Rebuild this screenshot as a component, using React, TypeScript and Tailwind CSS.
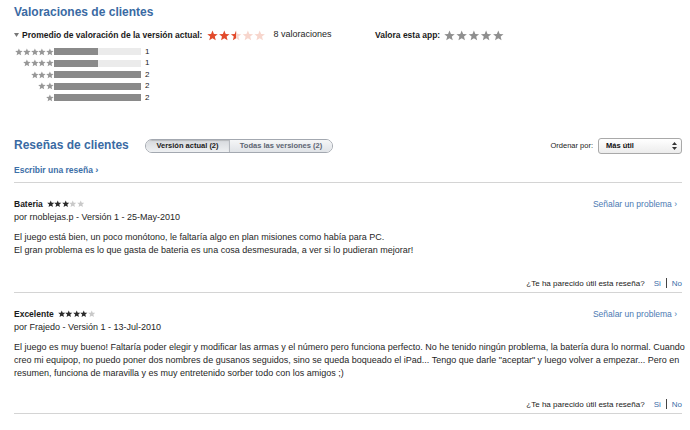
import React from "react";

const STAR = "10,1 12.6,7.1 19.5,7.6 14.2,12 15.9,18.8 10,15.1 4.1,18.8 5.8,12 0.5,7.6 7.4,7.1";

function Star({ size, color }: { size: number; color: string }) {
  return (
    <svg width={size} height={size} viewBox="0 0 20 20" className="block shrink-0">
      <polygon points={STAR} fill={color} />
    </svg>
  );
}

function StarRow({ filled, total = 5, size = 7.5, on = "#2b2b2b", off = "#c9c9c9" }: { filled: number; total?: number; size?: number; on?: string; off?: string }) {
  return (
    <span className="flex items-center">
      {Array.from({ length: total }).map((_, i) => (
        <Star key={i} size={size} color={i < filled ? on : off} />
      ))}
    </span>
  );
}

// big stars with the faded reflection underneath
function ShinyStars({ value, on, off, id, pitch = 11.8 }: { value: number; on: string; off: string; id: string; pitch?: number }) {
  return (
    <svg width={62} height={15} viewBox="0 0 62 15" className="block">
      <defs>
        <linearGradient id={`${id}-half`} x1="0" x2="1" y1="0" y2="0">
          <stop offset="50%" stopColor={on} />
          <stop offset="50%" stopColor={off} />
        </linearGradient>
        <linearGradient id={`${id}-fade`} x1="0" x2="0" y1="0" y2="1">
          <stop offset="0%" stopColor="#fff" stopOpacity="0.35" />
          <stop offset="100%" stopColor="#fff" stopOpacity="0" />
        </linearGradient>
        <mask id={`${id}-mask`}>
          <rect x="0" y="10.5" width="62" height="4.5" fill={`url(#${id}-fade)`} />
        </mask>
      </defs>
      {[0, 1].map((r) => (
        <g key={r} mask={r ? `url(#${id}-mask)` : undefined} transform={r ? "translate(0 21.5) scale(1 -1)" : undefined}>
          {Array.from({ length: 5 }).map((_, i) => {
            const fill = value >= i + 1 ? on : value > i ? `url(#${id}-half)` : off;
            return (
              <g key={i} transform={`translate(${i * pitch} 0) scale(0.55)`}>
                <polygon points={STAR} fill={fill} />
              </g>
            );
          })}
        </g>
      ))}
    </svg>
  );
}

const histogram = [
  { stars: 5, count: 1 },
  { stars: 4, count: 1 },
  { stars: 3, count: 2 },
  { stars: 2, count: 2 },
  { stars: 1, count: 2 },
];

type Review = { title: string; stars: number; by: string; lines: string[] };

const reviews: Review[] = [
  {
    title: "Bateria",
    stars: 3,
    by: "por rnoblejas.p - Versión 1 - 25-May-2010",
    lines: [
      "El juego está bien, un poco monótono, le faltaría algo en plan misiones como había para PC.",
      "El gran problema es lo que gasta de bateria es una cosa desmesurada, a ver si lo pudieran mejorar!",
    ],
  },
  {
    title: "Excelente",
    stars: 4,
    by: "por Frajedo - Versión 1 - 13-Jul-2010",
    lines: [
      "El juego es muy bueno! Faltaría poder elegir y modificar las armas y el número pero funciona perfecto. No he tenido ningún problema, la batería dura lo normal. Cuando",
      "creo mi equipop, no puedo poner dos nombres de gusanos seguidos, sino se queda boqueado el iPad... Tengo que darle \"aceptar\" y luego volver a empezar... Pero en",
      "resumen, funciona de maravilla y es muy entretenido sorber todo con los amigos ;)",
    ],
  },
];

function ReviewItem({ review }: { review: Review }) {
  return (
    <div className="border-t border-[#d4d4d4] pt-[15px] pb-[2px]">
      <div className="flex h-[13px] items-center justify-between leading-[13px]">
        <div className="flex items-center gap-[4px]">
          <span className="text-[8.5px] font-bold text-[#1a1a1a]">{review.title}</span>
          <StarRow filled={review.stars} />
        </div>
        <a className="pr-[5px] text-[8.5px] text-[#4b79b2]">Señalar un problema ›</a>
      </div>
      <div className="h-[13px] text-[9px] leading-[13px] text-[#262626]">{review.by}</div>
      <div className="mt-[7px] min-h-[28px] text-[9px] leading-[13px] text-[#262626]">
        {review.lines.map((l, i) => (
          <div key={i} className="whitespace-nowrap">{l}</div>
        ))}
      </div>
      <div className="mt-[18px] flex h-[13px] items-center justify-end text-[8px] leading-[13px]">
        <span className="text-[#1a1a1a]">¿Te ha parecido útil esta reseña?</span>
        <a className="ml-[9px] text-[#3b6ea8]">Si</a>
        <span className="mx-[5px] h-[10px] w-px bg-[#444]" />
        <a className="text-[#3b6ea8]">No</a>
      </div>
    </div>
  );
}

export default function App() {
  return (
    <div className="h-[430px] w-[690px] overflow-hidden bg-white pl-[14px] pr-[8px] font-['Liberation_Sans',Arial,sans-serif] text-[#333]">
      <h2 className="pt-[5px] text-[12px] font-bold leading-[15px] text-[#3a6aa3]">Valoraciones de clientes</h2>

      <div className="mt-[8px] flex h-[14px] items-center">
        <div className="flex w-[361px] items-center">
          <svg width="5" height="4" viewBox="0 0 5 4" className="mr-[3px]">
            <polygon points="0,0 5,0 2.5,4" fill="#777" />
          </svg>
          <span className="text-[8.5px] font-bold text-[#1a1a1a]">Promedio de valoración de la versión actual:</span>
          <span className="ml-[5px] mt-[4px]">
            <ShinyStars id="avg" value={2.5} on="#e24a2b" off="#f7d6cd" />
          </span>
          <span className="ml-[4px] text-[9px] text-[#262626]">8 valoraciones</span>
        </div>
        <span className="text-[8.5px] font-bold text-[#1a1a1a]">Valora esta app:</span>
        <span className="ml-[4px] mt-[4px]">
          <ShinyStars id="mine" value={5} on="#8f8f8f" off="#8f8f8f" pitch={12.2} />
        </span>
      </div>

      <div className="mt-[4px]">
        {histogram.map((h) => (
          <div key={h.stars} className="flex h-[11.5px] items-center">
            <div className="flex w-[40px] justify-end">
              <StarRow filled={h.stars} total={h.stars} size={7.8} on="#979797" />
            </div>
            <div className="h-[7px] w-[87px] bg-[#ebebeb]">
              <div className="h-full bg-[#8a8a8a]" style={{ width: `${(h.count / 2) * 100}%` }} />
            </div>
            <span className="ml-[4px] text-[8px] text-[#1a1a1a]">{h.count}</span>
          </div>
        ))}
      </div>

      <div className="mt-[34px] flex h-[16px] items-center">
        <h2 className="w-[131px] text-[12px] font-bold leading-[15px] text-[#3a6aa3]">Reseñas de clientes</h2>
        <div className="flex h-[14px] overflow-hidden rounded-full border border-[#a3a8b0] text-[7.5px] font-bold leading-[12px]">
          <span className="flex w-[83px] items-center justify-center bg-gradient-to-b from-[#d6d9dd] to-[#eef0f2] text-[#1a1a1a] shadow-[inset_0_1px_1px_rgba(0,0,0,0.15)]">
            Versión actual (2)
          </span>
          <span className="flex w-[103px] items-center justify-center border-l border-[#b5b9bf] bg-gradient-to-b from-[#f5f6f7] to-[#e0e3e7] text-[#5c6572]">
            Todas las versiones (2)
          </span>
        </div>
        <div className="ml-auto flex items-center">
          <span className="text-[7.5px] text-[#1a1a1a]">Ordenar por:</span>
          <div className="ml-[5px] flex h-[16px] w-[84px] items-center justify-between rounded-[3px] border border-[#a9a9a9] bg-gradient-to-b from-white to-[#ececec] pl-[7px] pr-[4px]">
            <span className="text-[7.5px] font-bold text-[#111]">Más útil</span>
            <svg width="5" height="8" viewBox="0 0 5 8">
              <polygon points="0,3 5,3 2.5,0" fill="#333" />
              <polygon points="0,5 5,5 2.5,8" fill="#333" />
            </svg>
          </div>
        </div>
      </div>

      <div className="mt-[9px] h-[13px] text-[8.5px] font-bold leading-[13px] text-[#3d6fa8]">
        Escribir una reseña <span className="text-[9.5px]">›</span>
      </div>

      <div className="mt-[6px]">
        {reviews.map((r) => (
          <ReviewItem key={r.title} review={r} />
        ))}
        <div className="border-t border-[#d4d4d4]" />
      </div>
    </div>
  );
}
